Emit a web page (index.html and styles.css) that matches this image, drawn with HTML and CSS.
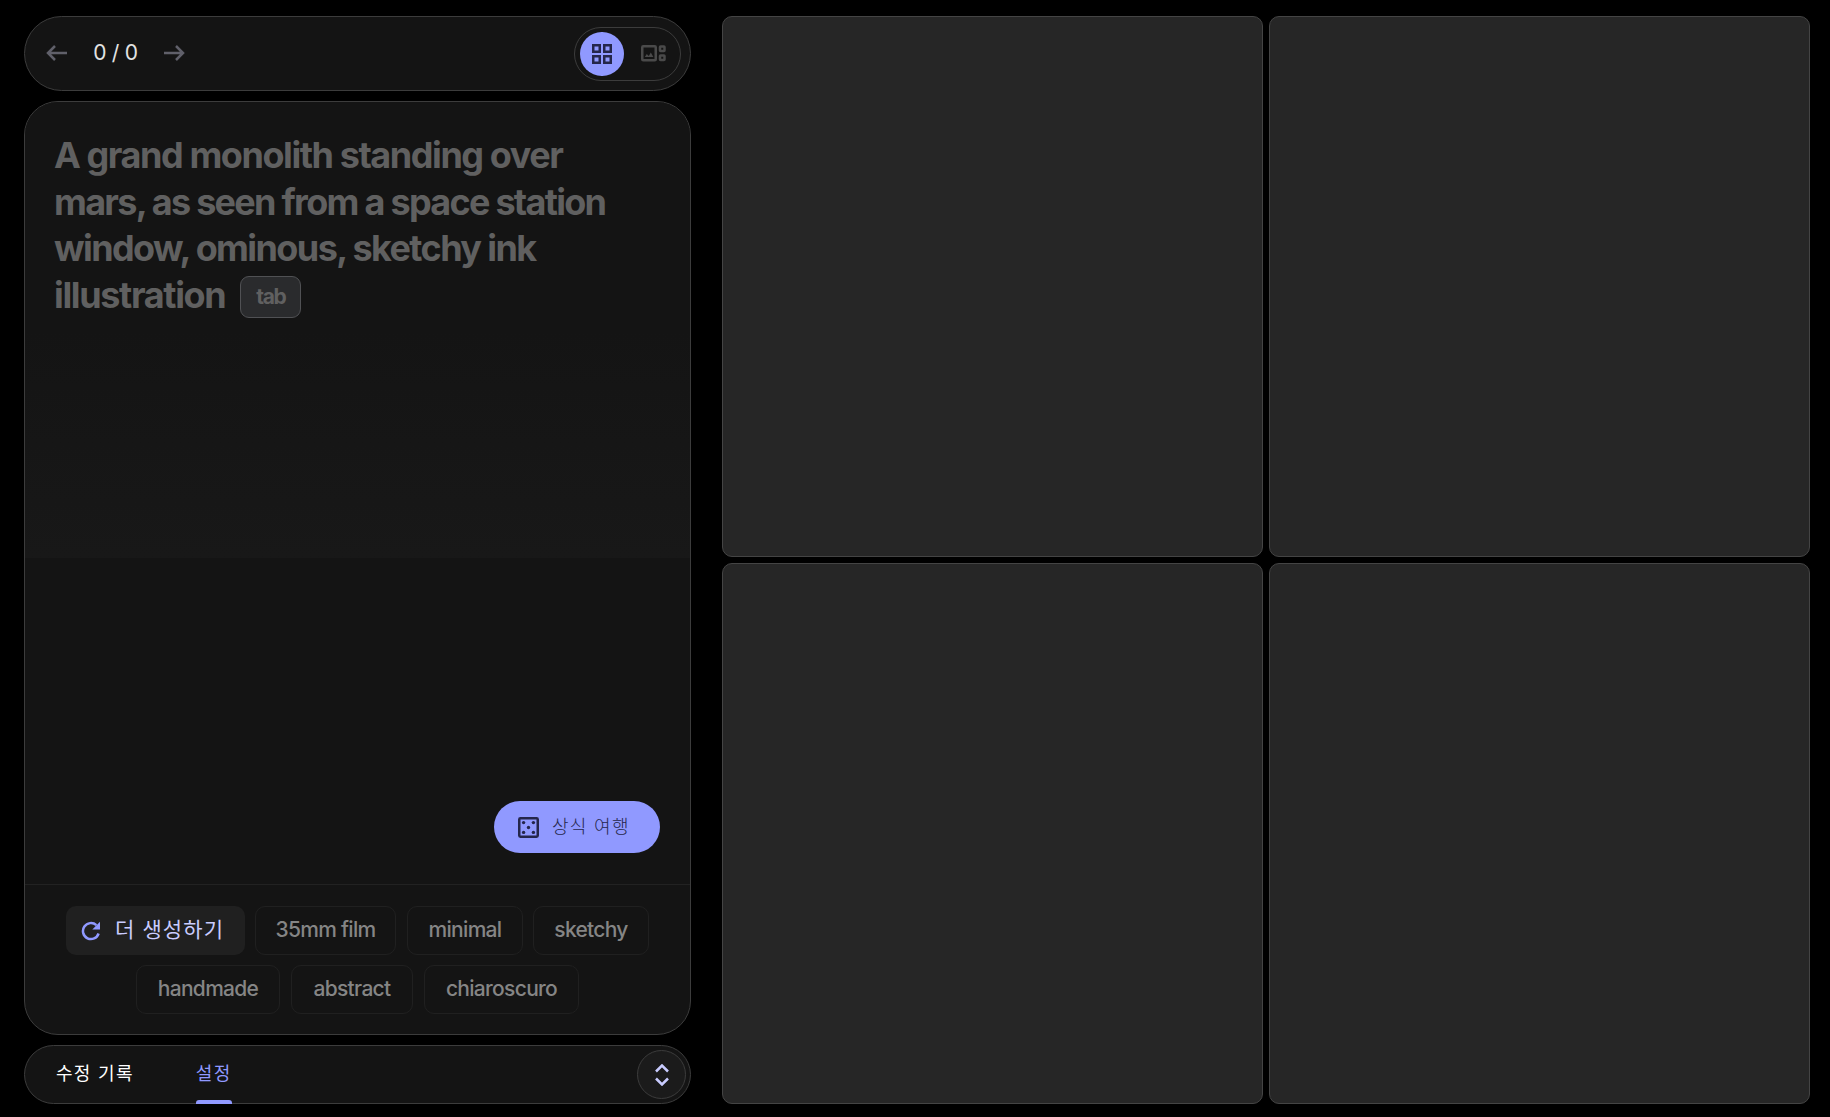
FILE: index.html
```html
<!DOCTYPE html>
<html lang="ko">
<head>
  <meta charset="UTF-8" />
  <meta name="viewport" content="width=device-width, initial-scale=1.0"/>
  <title>ImageFX</title>
  <link rel="stylesheet" href="styles.css">
</head>
<body>
  <main class="app">
    <section class="sidebar">
      <header class="topbar">
        <div class="pager">
          <button class="arrow" aria-label="prev">
            <svg width="22" height="16" viewBox="0 0 22 16"><path d="M21 8H2M9 1L2 8l7 7"/></svg>
          </button>
          <span class="count">0 / 0</span>
          <button class="arrow" aria-label="next">
            <svg width="22" height="16" viewBox="0 0 22 16"><path d="M1 8h19M13 1l7 7-7 7"/></svg>
          </button>
        </div>
        <div class="view-toggle">
          <button class="view active" aria-label="grid">
            <svg width="20" height="20" viewBox="0 0 20 20"><path d="M1.25 1.25h6.5v6.5h-6.5zM12.25 1.25h6.5v6.5h-6.5zM1.25 12.25h6.5v6.5h-6.5zM12.25 12.25h6.5v6.5h-6.5z"/></svg>
          </button>
          <button class="view" aria-label="single">
            <svg width="25" height="17" viewBox="0 0 25 17"><rect x="1.25" y="1.25" width="13.5" height="14" rx="1"/><rect x="19" y="1.5" width="4.5" height="4.5" rx=".5"/><rect x="19" y="10.5" width="4.5" height="4.5" rx=".5"/><path class="solid" d="M3.8 12l2-3 2 2 2-3.5 2.6 4.5z"/></svg>
          </button>
        </div>
      </header>

      <div class="prompt-card">
        <div class="prompt">
          <p class="prompt-text">
            <span class="line l1">A grand monolith standing over</span>
            <span class="line l2">mars, as seen from a space station</span>
            <span class="line l3">window, ominous, sketchy ink</span>
            <span class="line l4">illustration</span><kbd class="tab-key">tab</kbd>
          </p>
        </div>
        <div class="actions">
          <button class="lucky">
            <svg width="21" height="21" viewBox="0 0 21 21"><rect x="1.25" y="1.25" width="18.5" height="18.5" rx="1.2"/><g class="dots"><circle cx="5.6" cy="5.6" r="1.7"/><circle cx="15.4" cy="5.6" r="1.7"/><circle cx="10.5" cy="10.5" r="1.7"/><circle cx="5.6" cy="15.4" r="1.7"/><circle cx="15.4" cy="15.4" r="1.7"/></g></svg>
            <span class="ko">상식 여행</span>
          </button>
        </div>
        <div class="chips">
          <div class="chip-row">
            <button class="chip more">
              <svg width="20" height="20" viewBox="0 0 20 20"><path d="M17.6 12.5A8 8 0 1 1 15.4 4.2"/><path class="solid" d="M19 .8V8.500H11.300z"/></svg>
              <span class="ko">더 생성하기</span>
            </button>
            <button class="chip film">35mm film</button>
            <button class="chip minimal">minimal</button>
            <button class="chip sketchy">sketchy</button>
          </div>
          <div class="chip-row second">
            <button class="chip handmade">handmade</button>
            <button class="chip abstract">abstract</button>
            <button class="chip chiaroscuro">chiaroscuro</button>
          </div>
        </div>
      </div>

      <footer class="bottombar">
        <nav class="tabs">
          <a class="tab">수정 기록</a>
          <a class="tab selected">설정</a>
        </nav>
        <button class="expand" aria-label="expand">
          <svg width="14" height="22" viewBox="0 0 14 22"><path d="M1 7.5l6-6 6 6M1 14.5l6 6 6-6"/></svg>
        </button>
      </footer>
    </section>

    <section class="results">
      <div class="tile"></div>
      <div class="tile"></div>
      <div class="tile"></div>
      <div class="tile"></div>
    </section>
  </main>
</body>
</html>
```
FILE: styles.css
```css
* {
  box-sizing: border-box;
}

body {
  margin: 0;
  background: #000;
  font-family: Inter, 'Noto Sans CJK KR', sans-serif;
  color: #e3e3e3;
}

button {
  margin: 0;
  padding: 0;
  border: none;
  background: none;
  font-family: inherit;
  color: inherit;
  cursor: pointer;
}

svg {
  display: block;
  fill: none;
  stroke: currentColor;
  stroke-width: 2.5;
}

.solid, .dots {
  fill: currentColor;
  stroke: none;
}

.app {
  display: flex;
  gap: 31px;
  height: 1117px;
  padding: 16px 20px 13px 24px;
}

.sidebar {
  width: 667px;
  display: flex;
  flex-direction: column;
  gap: 10px;
}

.topbar, .prompt-card, .bottombar {
  background: #141414;
  border: 1px solid #3c3c3c;
}

.topbar {
  height: 75px;
  border-radius: 38px;
  display: flex;
  align-items: center;
  justify-content: space-between;
  padding: 0 9px 0 21px;
}

.pager {
  display: flex;
  align-items: center;
  padding-bottom: 1px;
}

.arrow {
  color: #60606a;
}

.count {
  width: 95px;
  text-align: center;
  font-size: 21px;
  line-height: 24px;
  letter-spacing: -0.3px;
}

.view-toggle {
  width: 107px;
  height: 54px;
  border: 1px solid #3c3c3c;
  border-radius: 27px;
  display: flex;
  align-items: center;
  gap: 8px;
  padding: 0 5px;
}

.view {
  width: 44px;
  height: 44px;
  border-radius: 50%;
  display: grid;
  place-items: center;
  color: #4a4a4a;
}

.view.active {
  background: #9099ff;
  color: #25264b;
}

.prompt-card {
  flex: 1;
  border-radius: 34px;
  overflow: hidden;
  display: flex;
  flex-direction: column;
}

.prompt {
  height: 456px;
  padding: 30px 29px 0;
  background: linear-gradient(#141414 50%, #181818);
}

.prompt-text {
  margin: 0;
  font-size: 36px;
  font-weight: 700;
  line-height: 46.7px;
  color: #606060;
}

.line {
  display: block;
  white-space: nowrap;
}

.l1 {
  letter-spacing: -1.43px;
}

.l2 {
  letter-spacing: -1.72px;
}

.l3 {
  letter-spacing: -1.6px;
}

.l4 {
  display: inline-block;
  letter-spacing: -1.35px;
}

.tab-key {
  display: inline-block;
  width: 61px;
  height: 42px;
  margin-left: 15px;
  border: 1px solid #505154;
  border-radius: 9px;
  background: #2a2b2d;
  font-family: inherit;
  font-size: 21px;
  line-height: 40px;
  letter-spacing: -1.3px;
  text-align: center;
  vertical-align: 4px;
}

.actions {
  flex: 1;
  display: flex;
  align-items: flex-end;
  justify-content: flex-end;
  padding: 0 30px 31px;
}

.lucky {
  width: 166px;
  height: 52px;
  border-radius: 26px;
  background: #9099ff;
  color: #25264b;
  display: flex;
  align-items: center;
  gap: 13px;
  padding-left: 24px;
  font-size: 18px;
  font-weight: 300;
  letter-spacing: 1.3px;
}

.ko {
  padding-bottom: 5px;
}

.chips {
  height: 150px;
  border-top: 1px solid #222;
  padding-top: 21px;
  display: flex;
  flex-direction: column;
  gap: 10px;
}

.chip-row {
  display: flex;
  justify-content: center;
  gap: 10px;
}

.chip-row.second {
  gap: 11px;
}

.chip {
  height: 49px;
  padding-bottom: 2px;
  border: 1px solid #202020;
  border-radius: 10px;
  font-size: 21px;
  font-weight: 500;
  letter-spacing: -0.7px;
  color: #858585;
  white-space: nowrap;
}

.chip.more {
  width: 179px;
  display: flex;
  align-items: center;
  gap: 14px;
  padding: 0 0 0 15px;
  border: none;
  background: #202020;
  color: #c9ccff;
  font-weight: 400;
  letter-spacing: 1.1px;
}

.more svg {
  color: #9099ff;
}

.film {
  width: 141px;
}

.minimal, .sketchy {
  width: 116px;
}

.minimal {
  margin-left: 1px;
}

.handmade {
  width: 144px;
}

.abstract {
  width: 122px;
}

.chiaroscuro {
  width: 155px;
}

.bottombar {
  height: 59px;
  border-radius: 30px;
  display: flex;
  align-items: center;
  justify-content: space-between;
  padding: 0 4px 0 31px;
}

.tabs {
  display: flex;
  gap: 62px;
}

.tab {
  height: 59px;
  line-height: 58px;
  font-size: 18px;
  letter-spacing: 1.3px;
  color: #fff;
}

/* indicator sits on the bottom edge of the bar */
.tab.selected {
  position: relative;
  color: #9099ff;
}

.tab.selected::after {
  content: '';
  position: absolute;
  left: 0;
  right: 0;
  bottom: 0;
  height: 4px;
  border-radius: 3px 3px 0 0;
  background: #9099ff;
}

.expand {
  width: 49px;
  height: 49px;
  border: 1px solid #3c3c3c;
  border-radius: 50%;
  background: #1b1b1b;
  color: #c9ccff;
  display: grid;
  place-items: center;
}

.results {
  flex: 1;
  display: grid;
  grid-template-columns: 1fr 1fr;
  grid-template-rows: 1fr 1fr;
  gap: 6px;
}

.tile {
  border: 1px solid #444;
  border-radius: 10px;
  background: #262626;
}
```
